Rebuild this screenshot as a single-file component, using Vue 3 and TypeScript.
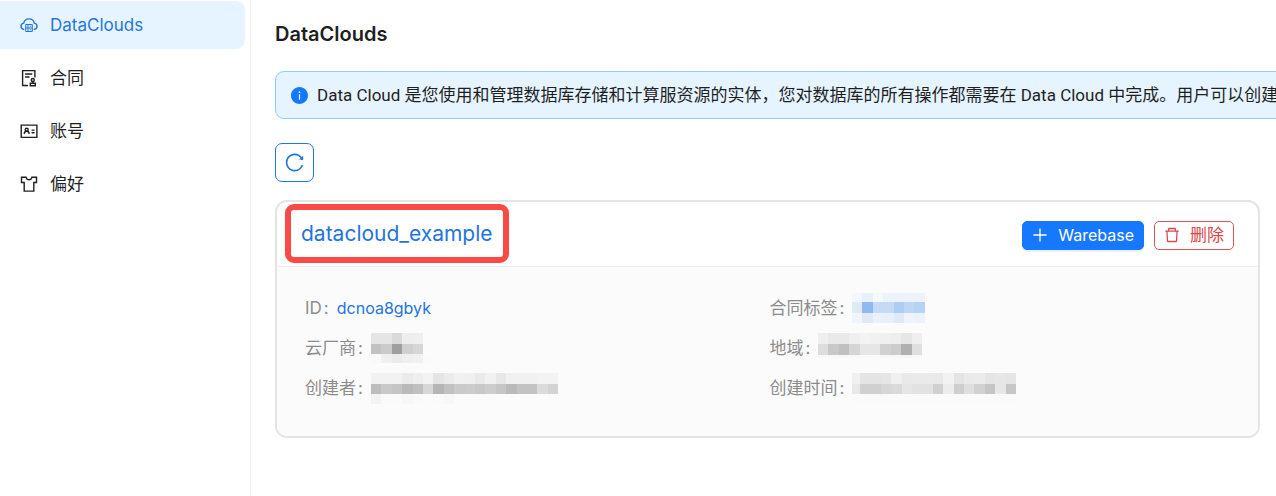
<script setup lang="ts">
interface MenuItem {
  key: string
  label: string
  active?: boolean
}

interface Mosaic {
  cell: string[][]
  heights: number[]
  lead?: number
}

interface Field {
  label: string
  link?: string
  mosaic?: Mosaic
}

const menu: MenuItem[] = [
  { key: 'cloud', label: 'DataClouds', active: true },
  { key: 'contract', label: '合同' },
  { key: 'account', label: '账号' },
  { key: 'preference', label: '偏好' },
]

const split = (s: string): string[] => s.split(' ').map((c) => '#' + c)

const fields: Field[] = [
  { label: 'ID', link: 'dcnoa8gbyk' },
  {
    label: '合同标签',
    mosaic: {
      heights: [9, 11, 10],
      cell: [
        split('f3f7fc e8f0fb f5f8fc edf3fb edf3fb edf3fb eef3fb'),
        split('dfeaf8 8fb9ef c4daf5 c4daf5 aecdf2 bcd6f4 b7d3f3'),
        split('f0f4fb e1e9f8 eaf1fb e9f0fa e1e9f8 eff4fb edf2fa'),
      ],
    },
  },
  {
    label: '云厂商',
    mosaic: {
      heights: [11, 10, 9],
      cell: [
        split('e5e5e5 e5e5e5 dadada eeeeee efefef fbfbfb'),
        split('c2c2c2 cbcbcb 9f9f9f d0d0d0 d6d6d6 fbfbfb'),
        split('f9f9f9 f0f0f0 ebebeb efefef f1f1f1 fafafa'),
      ],
    },
  },
  {
    label: '地域',
    mosaic: {
      heights: [11, 11, 3],
      cell: [
        split('efefef e9e9e9 e9e9e9 efefef f3f3f3 f1f1f1 f0f0f0 eeeeee e6e6e6 efefef'),
        split('dddddd c8c8c8 c0c0c0 d5d5d5 e6e6e6 e6e6e6 d1d1d1 cccccc b0b0b0 dfdfdf'),
        split('f9f9f9 f8f8f8 f8f8f8 f8f8f8 f9f9f9 fafafa f7f7f7 f7f7f7 f4f4f4 f8f8f8'),
      ],
    },
  },
  {
    label: '创建者',
    mosaic: {
      heights: [11, 10, 10],
      cell: [
        split('f2f2f2 f2f2f2 f2f2f2 ebebeb efefef f3f3f3 e5e5e5 ececec f1f1f1 f0f0f0 eaeaea f1f1f1 e8e8e8 f1f1f1 f1f1f1 f1f1f1 f3f3f3 f3f3f3'),
        split('bdbdbd c9c9c9 c5c5c5 bababa c0c0c0 d7d7d7 b5b5b5 c1c1c1 cacaca cccccc c8c8c8 cdcdcd c6c6c6 bababa c3c3c3 c3c3c3 dbdbdb d3d3d3'),
        split('f3f3f3 fafafa fafafa f7f7f7 fafafa fbfbfb fafafa f7f7f7 fbfbfb fbfbfb fbfbfb fbfbfb fbfbfb fbfbfb fbfbfb fbfbfb fbfbfb fbfbfb'),
      ],
    },
  },
  {
    label: '创建时间',
    mosaic: {
      heights: [11, 10, 9],
      lead: 8,
      cell: [
        split('f0f0f0 e4e4e4 e4e4e4 e6e6e6 f0f0f0 e9e9e9 eaeaea eaeaea e9e9e9 f2f2f2 e4e4e4 eaeaea ebebeb e5e5e5 e7e7e7 e5e5e5'),
        split('e8e8e8 d0d0d0 d0d0d0 d6d6d6 d9d9d9 e6e6e6 e2e2e2 e2e2e2 d0d0d0 ececec cecece dfdfdf d1d1d1 c5c5c5 e7e7e7 c7c7c7'),
        split('fafafa fafafa fafafa fafafa fafafa fafafa fafafa fafafa fafafa fafafa fafafa fafafa fafafa fafafa fafafa fafafa'),
      ],
    },
  },
]

const CELL = 10.4

const cellX = (m: Mosaic, i: number): number =>
  m.lead === undefined ? i * CELL : i === 0 ? 0 : m.lead + (i - 1) * CELL
const cellWidth = (m: Mosaic, i: number): number => (m.lead !== undefined && i === 0 ? m.lead : CELL)
const rowY = (m: Mosaic, r: number): number => m.heights.slice(0, r).reduce((a, b) => a + b, 0)
const mosaicWidth = (m: Mosaic): number => Math.round(cellX(m, m.cell[0].length))
</script>

<template>
  <div class="layout">
    <aside class="sidebar">
      <nav class="menu">
        <a v-for="item in menu" :key="item.key" href="#" class="menu-item" :class="{ active: item.active }">
          <svg class="menu-icon" viewBox="0 0 18 18" aria-hidden="true">
            <g v-if="item.key === 'cloud'">
              <path d="M4.3 13.6C2.2 13.4 1 12 1 10.3c0-1.7 1.1-2.9 2.700-3.200C4.300 4.500 6.300 2.900 9 2.900s4.700 1.600 5.300 4.200c1.600.3 2.700 1.500 2.700 3.200 0 1.700-1.200 3.100-3.300 3.300" />
              <path class="thin" d="M5.700 8.500h6.600v7H5.700zM5.700 12h6.600M8 8.500v7M9.800 10.200h1.300M9.800 13.800h1.300" />
            </g>
            <g v-else-if="item.key === 'contract'">
              <path d="M8 16.500H2.600V1.600h12.300v7M5.100 5h7.200M5.100 8h4.400" />
              <circle cx="12.800" cy="11" r="1.500" />
              <path d="M12.800 12.500v1.600M10.300 14.200h5v2.500h-5z" />
            </g>
            <g v-else-if="item.key === 'account'">
              <path d="M1.200 3.100h15.700v12.300H1.200zM11.600 8.100h2.900M11.600 10.700h2.900" />
              <circle cx="6.700" cy="7.700" r="1.500" />
              <path d="M4.200 11.900c.1-1.600 1.100-2.600 2.500-2.600s2.400 1 2.500 2.600" />
            </g>
            <g v-else>
              <path d="M1.500 2.300h4.600c.4 1.600 1.500 2.400 2.900 2.400s2.500-.8 2.900-2.400h4.600v5.200h-2.700v8.600H4.200V7.500H1.500z" />
            </g>
          </svg>
          <span>{{ item.label }}</span>
        </a>
      </nav>
    </aside>

    <main class="content">
      <h1 class="heading">DataClouds</h1>

      <div class="notice" role="status">
        <svg class="notice-icon" viewBox="64 64 896 896" aria-hidden="true">
          <path d="M512 64C264.6 64 64 264.6 64 512s200.6 448 448 448 448-200.6 448-448S759.4 64 512 64zm32 664c0 4.4-3.6 8-8 8h-48c-4.400 0-8-3.600-8-8V456c0-4.400 3.600-8 8-8h48c4.400 0 8 3.600 8 8v272zm-32-344a48.010 48.010 0 010-96 48.010 48.010 0 010 96z" />
        </svg>
        <span>Data Cloud 是您使用和管理数据库存储和计算服资源的实体，您对数据库的所有操作都需要在 Data Cloud 中完成。用户可以创建</span>
      </div>

      <button type="button" class="refresh" aria-label="刷新">
        <svg viewBox="64 64 896 896" aria-hidden="true">
          <path d="M909.1 209.3l-56.4 44.1C775.8 155.1 656.2 92 521.9 92 290 92 102.3 279.5 102 511.5 101.7 743.7 289.8 932 521.9 932c181.3 0 335.8-115 394.6-276.1 1.5-4.2-.7-8.9-4.9-10.3l-56.7-19.5a8 8 0 00-10.1 4.8c-1.8 5-3.8 10-5.9 14.9-17.3 41-42.1 77.8-73.7 109.4A344.77 344.77 0 01655.9 829c-42.3 17.9-87.4 27-133.8 27-46.5 0-91.5-9.1-133.8-27A341.5 341.5 0 01279 755.2a342.16 342.16 0 01-73.7-109.4c-17.9-42.4-27-87.4-27-133.9s9.1-91.5 27-133.9c17.3-41 42.1-77.8 73.7-109.4 31.6-31.6 68.4-56.4 109.3-73.8 42.3-17.9 87.4-27 133.8-27 46.5 0 91.5 9.1 133.8 27a341.5 341.5 0 01109.3 73.8c9.9 9.9 19.2 20.4 27.8 31.4l-60.2 47a8 8 0 003 14.1l175.6 43c5 1.2 9.9-2.6 9.900-7.700l.8-180.900c-.1-6.600-7.800-10.300-13-6.200z" />
        </svg>
      </button>

      <section class="card">
        <header class="card-head">
          <a href="#" class="card-title">datacloud_example<span class="marker"></span></a>
          <div class="actions">
            <button type="button" class="btn primary">
              <svg viewBox="64 64 896 896" aria-hidden="true">
                <path d="M482 152h60q8 0 8 8v704q0 8-8 8h-60q-8 0-8-8V160q0-8 8-8z" />
                <path d="M152 474h720q8 0 8 8v60q0 8-8 8H152q-8 0-8-8v-60q0-8 8-8z" />
              </svg>
              <span>Warebase</span>
            </button>
            <button type="button" class="btn danger">
              <svg viewBox="64 64 896 896" aria-hidden="true">
                <path d="M360 184h-8c4.400 0 8-3.600 8-8v8h304v-8c0 4.400 3.600 8 8 8h-8v72h72v-80c0-35.300-28.700-64-64-64H352c-35.300 0-64 28.700-64 64v80h72v-72zm504 72H160c-17.700 0-32 14.300-32 32v32c0 4.400 3.600 8 8 8h60.400l24.700 523c1.600 34.100 29.800 61 63.900 61h454c34.200 0 62.300-26.800 63.900-61l24.700-523H888c4.400 0 8-3.600 8-8v-32c0-17.700-14.300-32-32-32zM731.300 840H292.700l-24.200-512h487l-24.200 512z" />
              </svg>
              <span>删除</span>
            </button>
          </div>
        </header>
        <dl class="fields">
          <div v-for="field in fields" :key="field.label" class="field">
            <dt>{{ field.label }}</dt>
            <dd>
              <a v-if="field.link" href="#">{{ field.link }}</a>
              <svg v-else-if="field.mosaic" class="mosaic" :width="mosaicWidth(field.mosaic)" height="31" aria-hidden="true">
                <template v-for="(row, r) in field.mosaic.cell" :key="r">
                  <rect
                    v-for="(color, i) in row"
                    :key="i"
                    :x="cellX(field.mosaic, i)"
                    :y="rowY(field.mosaic, r)"
                    :width="cellWidth(field.mosaic, i)"
                    :height="field.mosaic.heights[r]"
                    :fill="color"
                  />
                </template>
              </svg>
            </dd>
          </div>
        </dl>
      </section>
    </main>
  </div>
</template>

<style>
body {
  background: #fff;
}
</style>

<style scoped>
.layout {
  display: flex;
  min-height: 100vh;
  overflow: hidden;
  font-family: Inter, "Noto Sans CJK SC", sans-serif;
  font-size: 17px;
  line-height: 26px;
  color: #1f1f1f;
}

.layout * {
  box-sizing: border-box;
}

a {
  color: #2374dc;
  text-decoration: none;
}

.sidebar {
  flex: 0 0 251px;
  box-sizing: border-box;
  border-right: 1px solid #eeeeee;
}

.menu {
  display: flex;
  flex-direction: column;
  gap: 5px;
  padding: 1px 5px 0 0;
}

.menu-item {
  display: flex;
  align-items: center;
  gap: 12px;
  height: 48px;
  padding-left: 20px;
  border-radius: 0 9px 9px 0;
  color: #1f1f1f;
}

.menu-item.active {
  background: #e6f4ff;
  color: #2374dc;
}

.menu-icon {
  width: 18px;
  height: 18px;
  fill: none;
  stroke: currentColor;
  stroke-width: 1.4;
}

.menu-icon .thin {
  stroke-width: 1;
}

.content {
  flex: 1;
  min-width: 0;
  padding: 20px 16px 24px 24px;
}

.heading {
  margin: 0 0 23px;
  font-size: 20px;
  line-height: 28px;
  font-weight: 600;
}

.notice {
  display: flex;
  align-items: center;
  gap: 9px;
  height: 48px;
  margin-right: -40px;
  padding-left: 15px;
  border: 1px solid #91caff;
  border-radius: 9px;
  background: #e6f4ff;
  font-family: Roboto, "Noto Sans CJK SC", sans-serif;
  white-space: nowrap;
}

.notice-icon {
  flex: none;
  width: 17px;
  height: 17px;
  fill: #1677ff;
}

.refresh {
  display: flex;
  align-items: center;
  justify-content: center;
  width: 39px;
  height: 39px;
  margin: 24px 0 18px;
  padding: 0;
  border: 1px solid #2374dc;
  border-radius: 7px;
  background: #fff;
}

.refresh svg {
  width: 19px;
  height: 19px;
  fill: #2374dc;
}

.card {
  border: 2px solid #e4e4e4;
  border-radius: 12px;
  overflow: hidden;
  background: #fff;
}

.card-head {
  display: flex;
  align-items: center;
  justify-content: space-between;
  height: 65px;
  padding: 0 24px;
  border-bottom: 1px solid #eeeeee;
}

.card-title {
  position: relative;
  font-size: 21px;
}

.marker {
  position: absolute;
  inset: -17px -16px -16px -16px;
  border: 6px solid #f94a45;
  border-radius: 9px;
}

.actions {
  display: flex;
  gap: 10px;
  padding-top: 2px;
}

.btn {
  display: flex;
  align-items: center;
  gap: 10px;
  height: 29px;
  padding: 0 9px;
  border: 1px solid #d9575a;
  border-radius: 5px;
  background: #fff;
  color: #d9484b;
  font: inherit;
}

.btn svg {
  width: 16px;
  height: 16px;
  fill: currentColor;
}

.btn.primary {
  border-color: #1677ff;
  background: #1677ff;
  color: #fff;
  font-size: 16px;
  box-shadow: 0 2px 0 rgba(5, 145, 255, 0.1);
}

.fields {
  display: grid;
  grid-template-columns: 1fr 1fr;
  row-gap: 14px;
  margin: 0;
  padding: 28px 24px 35px 28px;
  background: #fbfbfb;
}

.field {
  display: flex;
  align-items: center;
  height: 26px;
}

dt {
  color: #8c8c8c;
}

dt::after {
  content: ":";
  margin: 0 8px 0 2px;
}

dd {
  display: flex;
  align-items: center;
  margin: 0;
  font-size: 16px;
}

.mosaic {
  display: block;
  shape-rendering: crispEdges;
}
</style>
